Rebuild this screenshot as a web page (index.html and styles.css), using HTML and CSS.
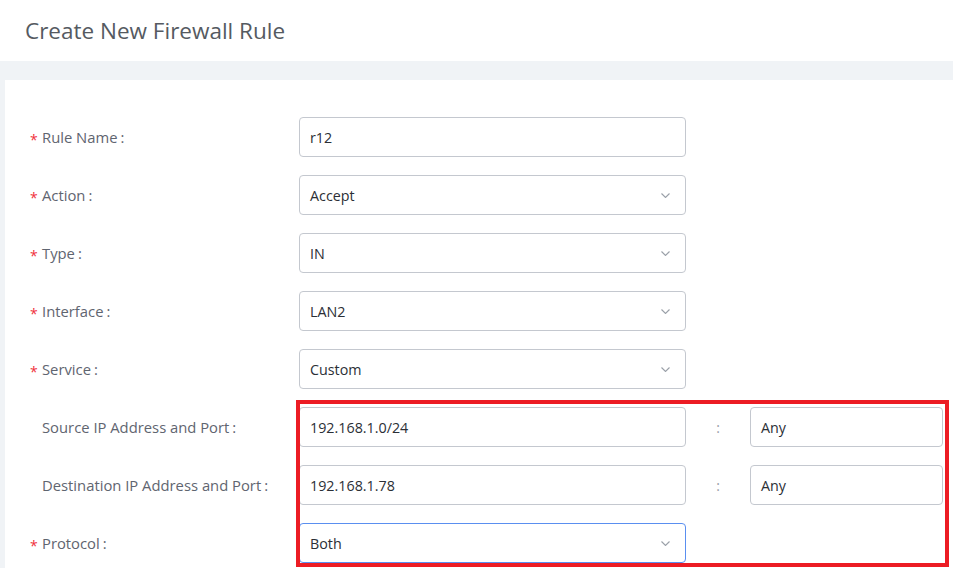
FILE: index.html
```html
<!DOCTYPE html>
<html>
<head>
<meta charset="utf-8">
<link rel="stylesheet" href="styles.css">
</head>
<body>
<header class="page-header">
  <h1 class="title">Create New Firewall Rule</h1>
</header>
<main class="content">
  <section class="card">
    <div class="form">
      <label class="label"><span class="req">*</span>Rule Name<span class="colon">:</span></label>
      <div class="control"><span class="value">r12</span></div>
      <div></div><div></div>

      <label class="label"><span class="req">*</span>Action<span class="colon">:</span></label>
      <div class="control select"><span class="value">Accept</span><svg class="chev" width="9" height="5" viewBox="0 0 9 5"><path d="M0.5 0.5 L4.5 4.5 L8.5 0.5" fill="none" stroke="#9aa0a8" stroke-width="1.1"/></svg></div>
      <div></div><div></div>

      <label class="label"><span class="req">*</span>Type<span class="colon">:</span></label>
      <div class="control select"><span class="value">IN</span><svg class="chev" width="9" height="5" viewBox="0 0 9 5"><path d="M0.5 0.5 L4.5 4.5 L8.5 0.5" fill="none" stroke="#9aa0a8" stroke-width="1.1"/></svg></div>
      <div></div><div></div>

      <label class="label"><span class="req">*</span>Interface<span class="colon">:</span></label>
      <div class="control select"><span class="value">LAN2</span><svg class="chev" width="9" height="5" viewBox="0 0 9 5"><path d="M0.5 0.5 L4.5 4.5 L8.5 0.5" fill="none" stroke="#9aa0a8" stroke-width="1.1"/></svg></div>
      <div></div><div></div>

      <label class="label"><span class="req">*</span>Service<span class="colon">:</span></label>
      <div class="control select"><span class="value">Custom</span><svg class="chev" width="9" height="5" viewBox="0 0 9 5"><path d="M0.5 0.5 L4.5 4.5 L8.5 0.5" fill="none" stroke="#9aa0a8" stroke-width="1.1"/></svg></div>
      <div></div><div></div>

      <label class="label"><span class="req blank">*</span>Source IP Address and Port<span class="colon">:</span></label>
      <div class="control"><span class="value">192.168.1.0/24</span></div>
      <div class="sep">:</div>
      <div class="control"><span class="value">Any</span></div>

      <label class="label"><span class="req blank">*</span>Destination IP Address and Port<span class="colon">:</span></label>
      <div class="control"><span class="value">192.168.1.78</span></div>
      <div class="sep">:</div>
      <div class="control"><span class="value">Any</span></div>

      <label class="label"><span class="req">*</span>Protocol<span class="colon">:</span></label>
      <div class="control select focused"><span class="value">Both</span><svg class="chev" width="9" height="5" viewBox="0 0 9 5"><path d="M0.5 0.5 L4.5 4.5 L8.5 0.5" fill="none" stroke="#9aa0a8" stroke-width="1.1"/></svg></div>
      <div></div><div></div>
    </div>
  </section>
</main>
<div class="highlight"></div>
</body>
</html>
```
FILE: styles.css
```css
html, body {
  margin: 0;
  padding: 0;
  height: 568px;
  overflow: hidden;
  background: #f0f3f6;
  font-family: "Open Sans", "Noto Sans", sans-serif;
}

.page-header {
  height: 61px;
  background: #ffffff;
  display: flex;
  align-items: center;
  padding-left: 25px;
  box-sizing: border-box;
}

.title {
  margin: 0;
  font-size: 22.5px;
  font-weight: 400;
  color: #555a61;
  line-height: 1;
  padding-top: 1px;
}

.content {
  padding: 19px 0 0 5px;
}

.card {
  background: #ffffff;
  padding: 37px 0 40px 25px;
  min-height: 600px;
}

.form {
  display: grid;
  grid-template-columns: 269px 387px 64px 193px;
  grid-auto-rows: 40px;
  row-gap: 18px;
  align-items: center;
}

.label {
  font-size: 14.8px;
  color: #5f6570;
  display: flex;
  align-items: center;
  white-space: nowrap;
}

.req {
  color: #f0323c;
  font-size: 14px;
  width: 12px;
  display: inline-block;
  position: relative;
  top: 2px;
}

.req.blank {
  visibility: hidden;
}

.colon {
  margin-left: 3px;
}

.control {
  height: 40px;
  box-sizing: border-box;
  border: 1px solid #c4c8cf;
  border-radius: 4px;
  display: flex;
  align-items: center;
  padding: 0 15px 0 10px;
  font-size: 14.3px;
  color: #2b2f36;
  background: #fff;
}

.control.select {
  justify-content: space-between;
}

.control.focused {
  border-color: #5a8ff0;
}

.chev {
  display: block;
  margin-top: 1px;
}

.sep {
  text-align: center;
  color: #9aa0a8;
  font-size: 14px;
}

.highlight {
  position: absolute;
  left: 296px;
  top: 400px;
  width: 653px;
  height: 167px;
  box-sizing: border-box;
  border: 4px solid #ec1c24;
  pointer-events: none;
}
```
